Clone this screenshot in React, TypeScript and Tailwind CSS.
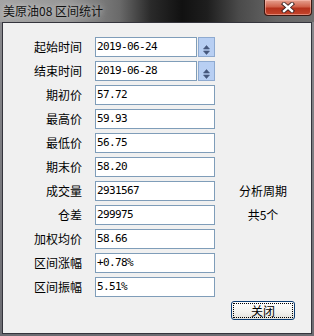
import React from "react";

const cjk = "font-['Noto_Sans_CJK_SC','Noto_Sans',sans-serif]";
const mono = "font-['DejaVu_Sans_Mono',monospace]";

function Spin() {
  return (
    <div className="ml-[1px] w-[17px] h-[20px] border border-[#8eaad0] bg-[#b8cff3] flex items-center justify-center">
      <svg width="15" height="18" viewBox="0 0 15 18">
        <path d="M4.5 11 L7.5 7.5 L10.5 11 Z" fill="#46587c" stroke="#46587c" strokeWidth="0.6" strokeLinejoin="round" />
        <path d="M4.5 13 L10.5 13 L7.5 16.5 Z" fill="#46587c" stroke="#46587c" strokeWidth="0.6" strokeLinejoin="round" />
      </svg>
    </div>
  );
}

function Row({
  label,
  value,
  spin,
  right,
}: {
  label: string;
  value: string;
  spin?: boolean;
  right?: string;
}) {
  return (
    <div className="flex items-center h-[20px]">
      <div className={`w-[79px] text-right text-[12px] leading-[20px] text-black ${cjk}`}>{label}</div>
      <div className="ml-[13px] flex">
        <div
          className={`${spin ? "w-[102px]" : "w-[120px]"} h-[20px] border border-[#7f9db9] bg-white pl-[1px] flex items-center text-[11px] tracking-[-0.62px] text-black ${mono}`}
        >
          {value}
        </div>
        {spin && <Spin />}
      </div>
      {right !== undefined && (
        <div className={`flex-1 text-center text-[12px] leading-[20px] text-black ${cjk}`}>{right}</div>
      )}
    </div>
  );
}

export default function App() {
  return (
    <div className="w-[314px] h-[336px] flex flex-col overflow-hidden bg-[linear-gradient(to_bottom,#8a8a8e,#6c6c72)]">
      <div className="h-[22px] flex justify-between items-start bg-[linear-gradient(to_right,#a4a4a4_0%,#969696_22%,#6a6a6a_38%,#2a2a2a_48%,#111111_58%,#1e1e1e_66%,#4a4a4a_76%,#666666_88%,#6e6e6e_100%)]">
        <span
          className={`pl-[3px] pt-[3px] text-[12px] leading-[16px] text-[#111] [text-shadow:0_0_6px_rgba(230,230,230,0.9)] ${cjk}`}
        >
          美原油08 区间统计
        </span>
        <div className="mr-[2px] w-[48px] h-[16px] rounded-b-[4px] border border-t-0 border-[#3b1710] bg-[linear-gradient(to_bottom,#e6a190_0%,#d0614a_45%,#b5321c_55%,#c4452c_100%)] flex items-center justify-center shadow-[inset_0_0_0_1px_rgba(255,200,190,0.5)]">
          <svg width="14" height="11" viewBox="0 0 14 11">
            <path d="M3 2 L11 9 M11 2 L3 9" stroke="#3a2020" strokeWidth="4.2" strokeLinecap="square" />
            <path d="M3 2 L11 9 M11 2 L3 9" stroke="#ffffff" strokeWidth="2.4" strokeLinecap="square" />
          </svg>
        </div>
      </div>
      <div className="mx-[2px] mb-[2px] flex-1 border border-[#34343c] bg-[#f0f0f0] flex flex-col pt-[14px]">
        <div className="flex flex-col gap-[4px]">
          <Row label="起始时间" value="2019-06-24" spin />
          <Row label="结束时间" value="2019-06-28" spin />
          <Row label="期初价" value="57.72" />
          <Row label="最高价" value="59.93" />
          <Row label="最低价" value="56.75" />
          <Row label="期末价" value="58.20" />
          <Row label="成交量" value="2931567" right="分析周期" />
          <Row label="仓差" value="299975" right="共5个" />
          <Row label="加权均价" value="58.66" />
          <Row label="区间涨幅" value="+0.78%" />
          <Row label="区间振幅" value="5.51%" />
        </div>
        <div className="mt-[4px] self-end mr-[16px]">
          <button
            className={`w-[64px] h-[19px] rounded-[3px] border border-[#0b3c72] bg-[linear-gradient(to_bottom,#ffffff,#f2f2ee_60%,#e2e2dc)] p-[1px] flex`}
          >
            <span
              className={`flex-1 border border-dotted border-black flex items-center justify-center text-[12px] leading-[14px] text-black ${cjk}`}
            >
              关闭
            </span>
          </button>
        </div>
      </div>
    </div>
  );
}
